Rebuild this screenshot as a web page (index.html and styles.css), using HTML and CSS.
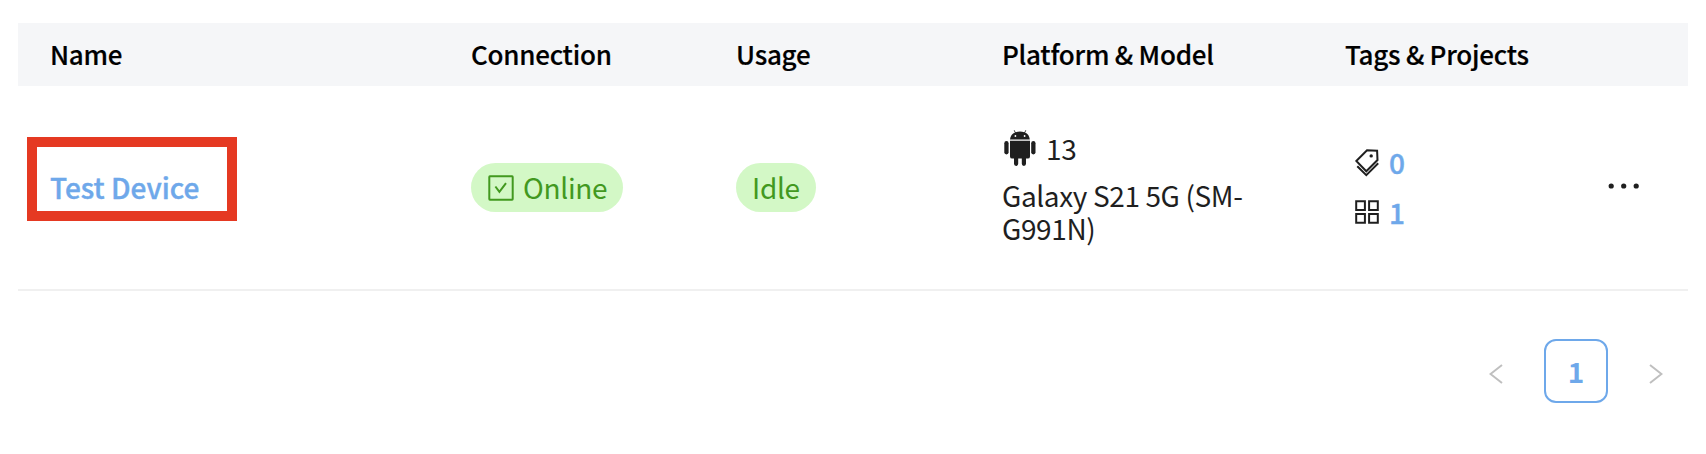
FILE: index.html
```html
<!DOCTYPE html>
<html lang="en">
<head>
<meta charset="utf-8">
<title>Devices</title>
<link rel="stylesheet" href="styles.css">
</head>
<body>
<main class="devices">
  <div class="row head">
    <div>Name</div>
    <div>Connection</div>
    <div>Usage</div>
    <div>Platform &amp; Model</div>
    <div>Tags &amp; Projects</div>
    <div></div>
  </div>
  <div class="row device">
    <div class="name"><a class="link">Test Device</a><span class="highlight"></span></div>
    <div>
      <span class="badge">
        <svg class="check" width="26" height="26" viewBox="0 0 26 26"><rect x="1.3" y="1.3" width="23.4" height="23.4" rx=".6"/><path d="M7.4 11.5L11.4 16.8L18 8.2"/></svg>
        Online
      </span>
    </div>
    <div><span class="badge">Idle</span></div>
    <div class="platform">
      <div class="os">
        <svg class="android" width="32" height="36" viewBox="0 0 32 36">
          <path d="M6 9.6C6.2 6 8.4 3.600 11 2.500L9.700.4L10.200.1L11.700 2.200Q16 .9 20.300 2.200L21.800.1L22.300.4L21 2.500C23.600 3.600 25.600 6 25.800 9.600Z"/>
          <path d="M6 10.800H26V26.400Q26 28.600 23.800 28.600H22V33.800A2.100 2.100 0 0 1 17.800 33.800V28.600H14.200V33.800A2.100 2.100 0 0 1 10 33.800V28.600H8.200Q6 28.600 6 26.400Z"/>
          <rect x=".3" y="11" width="4.300" height="13.400" rx="2.150"/>
          <rect x="27.200" y="11" width="4.300" height="13.400" rx="2.150"/>
          <circle class="eye" cx="11.400" cy="6" r=".9"/><circle class="eye" cx="20.600" cy="6" r=".9"/>
        </svg>
        13
      </div>
      <div class="model">Galaxy S21 5G (SM-G991N)</div>
    </div>
    <div class="counts">
      <div class="count">
        <svg class="outline tag" width="24" height="28" viewBox="0 0 24 28"><path d="M1.300 12L12 1.300L22.100 1.800L22.500 11L11.300 22.300Z"/><path d="M2.300 17.200L11.300 26.200L23.200 14.300"/><circle class="hole" cx="16.200" cy="6.900" r="1.700"/></svg>
        <span>0</span>
      </div>
      <div class="count">
        <svg class="outline" width="24" height="24" viewBox="0 0 24 24"><path d="M1.200 1.200H9.900V9.900H1.200ZM14.100 1.200H22.800V9.900H14.100ZM1.200 14.100H9.900V22.800H1.200ZM14.100 14.100H22.800V22.800H14.100Z"/></svg>
        <span>1</span>
      </div>
    </div>
    <div class="more">
      <svg width="32" height="6" viewBox="0 0 32 6"><circle cx="3.200" cy="3" r="2.600"/><circle cx="15.700" cy="3" r="2.600"/><circle cx="28.200" cy="3" r="2.600"/></svg>
    </div>
  </div>
  <nav class="pager">
    <svg class="arrow" width="14" height="20" viewBox="0 0 14 20"><path d="M13 1L1.500 10L13 19"/></svg>
    <span class="page">1</span>
    <svg class="arrow" width="14" height="20" viewBox="0 0 14 20"><path d="M1 1L12.500 10L1 19"/></svg>
  </nav>
</main>
</body>
</html>
```

FILE: styles.css
```css
* { box-sizing: border-box; }
body {
  margin: 0;
  background: #fff;
  color: #1f1f1f;
  font: 28px/33px "Noto Sans CJK KR", sans-serif;
}
svg { display: block; flex: none; }
.devices { padding: 23px 18px 0; }
.row {
  display: grid;
  grid-template-columns: 421px 265px 266px 343px 1fr 80px;
  padding-left: 32px;
}
.head {
  height: 63px;
  padding-bottom: 2px;
  align-items: center;
  background: #f5f6f8;
  color: #000;
  font-size: 26px;
  font-weight: 500;
  letter-spacing: -.25px;
  -webkit-text-stroke: .2px currentColor;
}
.device {
  height: 205px;
  align-items: center;
  border-bottom: 2px solid #f0f0f0;
}
.name { position: relative; }
.link { color: #6ea8ea; font-weight: 500; -webkit-text-stroke: .4px currentColor; }
.highlight {
  position: absolute;
  left: -23px;
  top: -34px;
  width: 210px;
  height: 84px;
  border: 10px solid #e53922;
}
.badge {
  display: inline-flex;
  align-items: center;
  height: 49px;
  padding: 0 16px;
  gap: 9px;
  border-radius: 25px;
  background: #d3f8c6;
  color: #42991f;
  letter-spacing: -.3px;
  vertical-align: top;
}
.check { margin-left: 1px; fill: none; stroke: #42991f; stroke-width: 2; }
.os { display: flex; align-items: center; gap: 10px; padding-left: 2px; height: 40px; }
.android { fill: #1f1f1f; }
.android .eye { fill: #fff; }
.platform { margin-top: -2px; letter-spacing: -.38px; }
.model { width: 270px; margin-top: 11px; }
.counts { display: grid; gap: 17px; padding-left: 10px; }
.count { display: flex; align-items: center; gap: 10px; color: #6ea8ea; font-weight: 500; -webkit-text-stroke: .4px currentColor; }
.outline { fill: none; stroke: #1f1f1f; stroke-width: 2; margin-top: -1px; }
.outline.tag { margin-top: 1px; }
.outline .hole { fill: #1f1f1f; stroke: none; }
.more { fill: #1f1f1f; margin-top: -4px; }
.pager {
  display: flex;
  align-items: center;
  justify-content: flex-end;
  gap: 41px;
  margin-top: 48px;
  padding-right: 25px;
}
.page {
  display: grid;
  place-items: center;
  width: 64px;
  height: 64px;
  border: 2px solid #6ea8ea;
  border-radius: 12px;
  color: #6ea8ea;
  font-weight: 700;
}
.arrow { fill: none; stroke: #bfbfbf; stroke-width: 2; margin-top: 5px; }
```
